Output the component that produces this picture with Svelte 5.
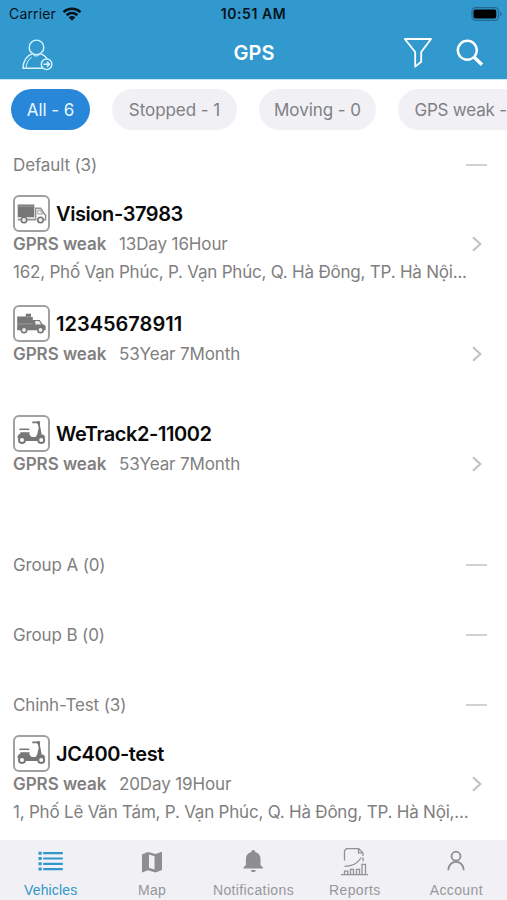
<script>
  const filters = [
    { label: 'All - 6', width: 79, active: true },
    { label: 'Stopped - 1', width: 125 },
    { label: 'Moving - 0', width: 117 },
    { label: 'GPS weak - 5', width: 138 }
  ];
  const groups = [
    {
      name: 'Default (3)',
      items: [
        { icon: 'truck', name: 'Vision-37983', age: '13Day 16Hour', address: '162, Phố Vạn Phúc, P. Vạn Phúc, Q. Hà Đông, TP. Hà Nội...' },
        { icon: 'loaded', name: '12345678911', age: '53Year 7Month' },
        { icon: 'scooter', name: 'WeTrack2-11002', age: '53Year 7Month' }
      ]
    },
    { name: 'Group A (0)', items: [] },
    { name: 'Group B (0)', items: [] },
    {
      name: 'Chinh-Test (3)',
      items: [
        { icon: 'scooter', name: 'JC400-test', age: '20Day 19Hour', address: '1, Phố Lê Văn Tám, P. Vạn Phúc, Q. Hà Đông, TP. Hà Nội,...' }
      ]
    }
  ];
  const tabs = ['Vehicles', 'Map', 'Notifications', 'Reports', 'Account'];
</script>

<div class="screen">
  <header>
    <div class="status">
      <div class="carrier">
        <span>Carrier</span>
        <svg width="20" height="14" viewBox="0 0 20 14">
          <g fill="none" stroke="#07131b" stroke-width="2.5">
            <path d="M1.5 5.1C6.2.7 13.8.7 18.5 5.1" />
            <path d="M4.6 8.2c3.1-2.8 7.7-2.8 10.8 0" />
          </g>
          <path d="M6.6 10.2c2-1.7 4.8-1.7 6.8 0L10 13.7z" fill="#07131b" />
        </svg>
      </div>
      <span class="time">10:51 AM</span>
      <svg class="battery" width="32" height="14" viewBox="0 0 32 14">
        <rect x="1" y=".7" width="26.5" height="12.6" rx="3.7" fill="none" stroke="#23698e" stroke-width="1.2" />
        <rect x="2.5" y="2.4" width="22.8" height="9.2" rx="2" fill="#000" />
        <path d="M29 4.6c2 .8 2 4 0 4.8z" fill="#23698e" />
      </svg>
    </div>
    <div class="nav">
      <svg class="user" width="34" height="34" viewBox="0 0 34 34" fill="none" stroke="#d9f3ff" stroke-width="1.4" stroke-linejoin="round">
        <circle cx="15.5" cy="9.4" r="7.3" />
        <path d="M11.6 15.6C5.8 17.5 2.4 22.5 1.9 30.2H21.5M19.2 15.6C22.5 16.7 24.6 18.1 26.2 20.6" />
        <path d="M11.6 15.6c1.2 3.3 6 3.3 7.6 0M5.2 29.5c.3-4.8 2-8 5.5-10.2" stroke-width="1" />
        <circle cx="25.6" cy="26.3" r="5.3" />
        <path d="M22.5 26.3h5.7M26 23.9l2.5 2.4-2.5 2.4" stroke-width="1.5" />
      </svg>
      <h1>GPS</h1>
      <svg class="funnel" width="30" height="32" viewBox="0 0 30 32" fill="none" stroke="#fff" stroke-width="1.8" stroke-linejoin="round">
        <path d="M1.8 2h26.2l-9.8 13v9.8l-6 4.8V15z" />
      </svg>
      <svg class="search" width="28" height="28" viewBox="0 0 28 28" fill="none" stroke="#fff">
        <circle cx="11.3" cy="11.3" r="9.5" stroke-width="2.4" />
        <path d="M18.2 18.2l7.8 7.6" stroke-width="3.4" />
      </svg>
    </div>
  </header>

  <nav class="filters">
    {#each filters as f}
      <button class:active={f.active} style="width: {f.width}px">{f.label}</button>
    {/each}
  </nav>

  <main>
    {#each groups as g}
      <section>
        <div class="group"><span>{g.name}</span><i></i></div>
        {#each g.items as v}
          <article>
            <div class="title">
              <div class="tile">
                <svg width="31" height="31" viewBox="0 0 31 31">
                  {#if v.icon === 'scooter'}
                    <path d="M3.3 11.3h10" stroke="#777" stroke-width="1.5" />
                    <path d="M16.3 4.4h6.2l2.2 12" fill="none" stroke="#737373" stroke-width="1.8" />
                    <path d="M21.3 3.200h2.600v3h-2.600z" fill="#737373" />
                    <path d="M4.300 14.200h9.200v2.600l2 2.200h3.700c1.600-.7 2.500-3.500 3-7.800h1.600l1.200 5c2.500.2 4 1.600 4.500 3.400l-3.500-.2c-2.300.2-4 1.500-4.500 3.500H9.800c-.3-2.600-2.600-3.700-4.800-3.400l-3.600.8c.2-2.700 1-4 2.900-4.600z" fill="#777" />
                    <g fill="#fff" stroke="#777" stroke-width="2">
                      <circle cx="6" cy="22" r="3" />
                      <circle cx="25.200" cy="22" r="3" />
                    </g>
                  {:else}
                    {#if v.icon === 'truck'}
                      <path d="M1.700 6.500h16.600v12.700H1.700z" fill="#777" />
                      <path d="M1.700 8.300h16.600" stroke="#aaa" stroke-width=".7" />
                      <path d="M1.700 21.700h18V10.300h5l3.700 5.600 1.200 1.200v4.600h-4" fill="none" stroke="#929292" stroke-width="1.500" />
                      <path d="M1.700 20h18" stroke="#c9c9c9" stroke-width="1.200" />
                      <path d="M21.900 12.200h2.300l2.300 3.800h-4.600z" fill="none" stroke="#999" stroke-width="1" />
                    {:else}
                      <path d="M1.200 8.500h8.600V5.800h5.200v3.100h1.800v3h6.900l2.700 4.200 3.200 1.600v4.600H1.200z" fill="#777" />
                      <path d="M19.300 13h3.800l2 3.400h-5.800z" fill="#eee" />
                      <path d="M1.200 15.900h15.600M9.800 8.900h5.200" fill="none" stroke="#aaa" stroke-width=".7" />
                    {/if}
                    <g fill="#eee" stroke="#777" stroke-width="1.600">
                      <circle cx="8" cy="22" r="2.700" />
                      <circle cx="24.500" cy="22" r="2.700" />
                    </g>
                  {/if}
                </svg>
              </div>
              <h2 class:digits={v.icon === 'loaded'}>{v.name}</h2>
            </div>
            <div class="state">
              <b>GPRS weak</b><span>{v.age}</span>
              <svg width="12" height="16" viewBox="0 0 12 16"><path d="M2 1.300l7.300 6.700L2 14.700" fill="none" stroke="#c3c3c5" stroke-width="2.200" /></svg>
            </div>
            {#if v.address}<p>{v.address}</p>{/if}
          </article>
        {/each}
      </section>
    {/each}
  </main>

  <footer>
    {#each tabs as tab, i}
      <button class:current={i === 0}>
        <svg width="30" height="32" viewBox="0 0 30 32">
          {#if i === 0}
            <g fill="#3197ca">
              {#each [6.7, 12, 17.3, 22.6] as y}
                <path d="M2.500 {y - 1}h3.200v3H2.500zM7.200 {y - .6}h19.600v2.200H7.200z" />
              {/each}
            </g>
          {:else if i === 1}
            <path d="M5 8.200l6-2.200 7.500 2 6.500-2.200v18.300l-6.500 2.400-7.500-2.200-6 2.200z" fill="#8e8e92" />
            <path d="M12 8.600l5.500 1.600v13.200L12 21.800z" fill="#f0f0f5" />
          {:else if i === 2}
            <path d="M5.500 22.600v-1.200l2.400-2.500v-6c0-3.500 2-5.900 5.200-6.600C13.300 3.300 17.200 3.300 17.400 6.300c3.200.7 5.100 3.100 5.100 6.600v6l2.500 2.500v1.200zM12.800 24h5c-.3 3-4.700 3-5 0z" fill="#8e8e92" />
          {:else if i === 3}
            <g fill="none" stroke="#929296" stroke-width="1.300">
              <path d="M4.500 14.500V4.700l2-2h12.200l4.300 4.200v3M23 11.500v4M18.500 3v3.900H23M4.500 20.300c8.400-.3 12.500-2.200 16.800-8.800" />
              <path d="M1 28.700h27M4.500 28.300v-3.100h3.300v3.100M10.500 28.300v-5h3v5M16.500 28.300v-5h3v5M22 28.300v-10h3.500v10" />
            </g>
          {:else}
            <g fill="none" stroke="#8e8e92" stroke-width="1.800">
              <circle cx="15" cy="10.200" r="4.500" />
              <path d="M7.200 24.200c.3-11 15.300-11 15.600 0" />
            </g>
          {/if}
        </svg>
        <span>{tab}</span>
      </button>
    {/each}
  </footer>
</div>

<style>
  :global(body) { margin: 0; }
  .screen { width: 507px; height: 900px; overflow: hidden; display: flex; flex-direction: column; background: #fff; font-family: Inter, "Noto Sans", sans-serif; color: #808080; }
  h1, h2, p { margin: 0; }
  svg { display: block; flex: none; }
  button { border: 0; padding: 0; font: inherit; flex: none; }
  header { height: 79px; flex: none; background: #3299ce; border-bottom: 1px solid #c6eaf8; }
  header { box-sizing: border-box; height: 80px; }
  .status { height: 27px; display: grid; grid-template-columns: 1fr auto 1fr; align-items: center; color: #07131b; font-size: 14px; }
  .carrier { display: flex; align-items: center; gap: 6px; padding-left: 9px; }
  .carrier span { letter-spacing: .15px; }
  .time { font-weight: 600; letter-spacing: .55px; }
  .battery { justify-self: end; margin-right: 4px; }
  .nav { height: 51px; display: flex; align-items: center; padding: 0 22px 0 21px; box-sizing: border-box; }
  .user { margin-top: 5px; }
  h1 { width: 60px; margin-left: 169px; margin-right: 119px; text-align: center; font-size: 20px; line-height: 24px; font-weight: 600; color: #fff; }
  .funnel { margin-right: 23px; }
  .search { margin-right: 1px; }
  .filters { height: 60px; flex: none; display: flex; gap: 22px; padding: 9px 0 0 11px; box-sizing: border-box; overflow: hidden; }
  .filters button { height: 41px; border-radius: 21px; background: #f1f0f5; color: #808084; font-size: 17px; letter-spacing: -.05px; white-space: nowrap; }
  .filters button:last-child { letter-spacing: -.2px; padding-left: 2px; box-sizing: border-box; }
  .filters .active { background: #2887d9; color: #e9f7ff; }
  main { flex: 1; min-height: 0; overflow: hidden; }
  section { margin-bottom: 20px; }
  .group { height: 50px; display: flex; align-items: center; justify-content: space-between; padding: 0 20px 0 13px; font-size: 17px; letter-spacing: -.13px; }
  .group i { width: 21px; height: 2px; background: #d1d1d3; }
  article { height: 110px; padding: 5px 20px 0 13px; box-sizing: border-box; }
  .title { display: flex; align-items: center; gap: 6px; height: 37px; }
  .tile { width: 37px; height: 37px; box-sizing: border-box; border: 2px solid #a0a0a0; border-radius: 6px; display: flex; align-items: center; justify-content: center; }
  h2 { font-size: 20px; font-weight: 600; letter-spacing: -.42px; color: #0a0a0a; }
  .digits { letter-spacing: 0; }
  .state { height: 26px; display: flex; align-items: center; margin-top: -1px; margin-bottom: 1px; font-size: 17px; }
  .state b { font-weight: 600; width: 106px; letter-spacing: -.05px; }
  .state span { letter-spacing: -.12px; }
  .state svg { margin-left: auto; margin-right: 4px; }
  p { font-size: 17px; line-height: 28px; letter-spacing: -.21px; white-space: nowrap; }
  footer { height: 60px; flex: none; display: grid; grid-template-columns: repeat(5, 1fr); background: #f0f0f5; }
  footer button { background: none; display: flex; flex-direction: column; align-items: center; padding-top: 6px; color: #97979b; font-family: "Liberation Sans", Arial, sans-serif; font-size: 14px; letter-spacing: .38px; }
  footer span { line-height: 18px; margin-top: 3px; }
  footer .current { color: #3197ca; letter-spacing: .15px; }
</style>
